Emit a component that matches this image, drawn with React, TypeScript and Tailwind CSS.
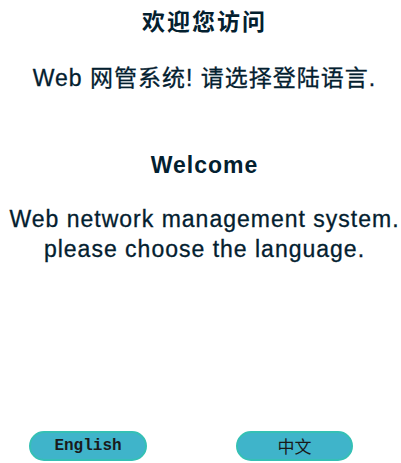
export default function App() {
  const sans = { fontFamily: '"Liberation Sans", Arial, "Noto Sans CJK SC", sans-serif' };
  return (
    <div className="w-[401px] h-[463px] bg-white overflow-hidden pl-2 text-[#03202f]" style={sans}>
      <div className="flex flex-col items-center">
        <div className="pt-[7px] h-[37px] text-[23px] leading-[30px] font-bold tracking-[2px] whitespace-nowrap">
          欢迎您访问
        </div>
        <div className="mt-[26px] text-[23px] leading-[30px] tracking-[1px] whitespace-nowrap [-webkit-text-stroke:0.3px_#03202f]">
          Web 网管系统! 请选择登陆语言.
        </div>
        <div className="mt-[57px] text-[23px] leading-[30px] font-bold tracking-[1px] whitespace-nowrap">
          Welcome
        </div>
        <div className="mt-[24px] text-[23px] leading-[30px] tracking-[1px] text-center whitespace-nowrap [-webkit-text-stroke:0.3px_#03202f]">
          Web network management system.
          <br />
          please choose the language.
        </div>
      </div>
      <div className="mt-[167px] flex gap-[89px] pl-[21px]">
        <button
          className="w-[118px] h-[30px] rounded-full bg-[#3fb4ca] border-2 border-[#35c0b5] text-[16px] font-bold text-[#1a1a1a] flex items-center justify-center"
          style={{ fontFamily: '"Liberation Mono", "Courier New", monospace' }}
        >
          English
        </button>
        <button
          className="w-[117px] h-[30px] rounded-full bg-[#3fb4ca] border-2 border-[#35c0b5] text-[17px] text-[#1a1a1a] flex items-center justify-center"
          style={{ fontFamily: '"Noto Sans CJK SC", sans-serif' }}
        >
          中文
        </button>
      </div>
    </div>
  );
}
